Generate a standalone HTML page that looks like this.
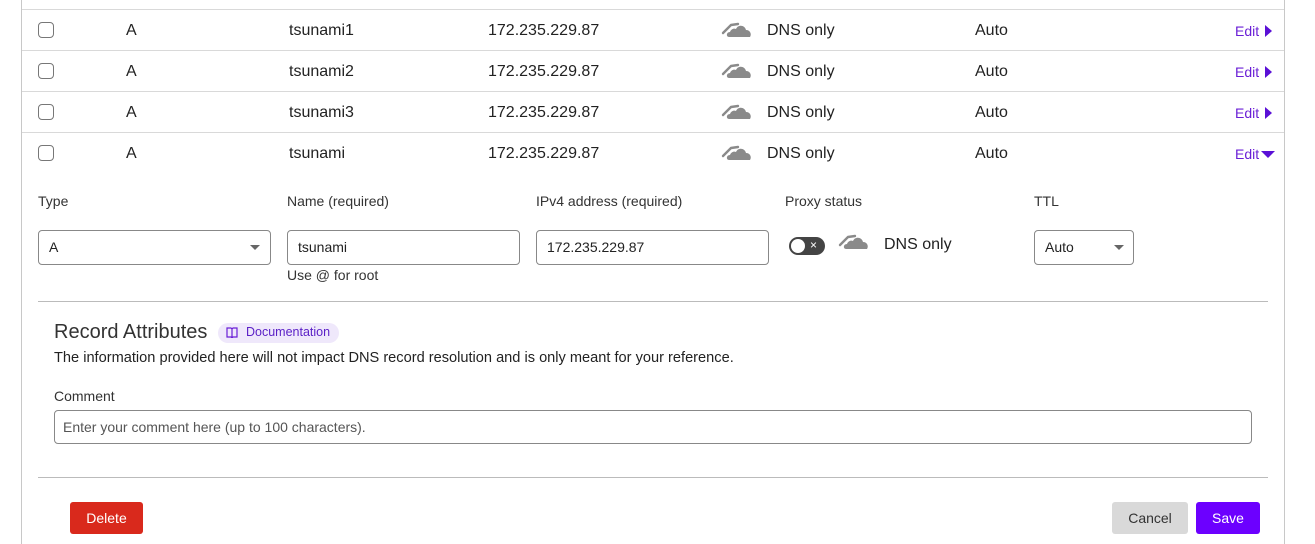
<!DOCTYPE html>
<html><head><meta charset="utf-8"><style>
*{box-sizing:border-box;margin:0;padding:0}
body{width:1315px;height:544px;background:#fff;font-family:"Liberation Sans",sans-serif;color:#222;position:relative;overflow:hidden}
.a{position:absolute;white-space:nowrap}
.hl{position:absolute;left:22px;width:1262px;height:1px;background:#d9d9d9}
.cb{position:absolute;left:38px;width:16px;height:16px;border:1px solid #777;border-radius:4px}
.t{font-size:16px}
.edit{color:#6a1fd6;font-size:14px}
.inp{position:absolute;border:1px solid #888;border-radius:4px;height:35px;font-size:14px;padding:0 10px;line-height:33px}
.lab{font-size:14px;color:#333}
.caret{position:absolute;width:0;height:0;border-left:5px solid transparent;border-right:5px solid transparent;border-top:5px solid #666}
.btn{position:absolute;height:32px;border-radius:3px;font-size:14px;line-height:32px;text-align:center}
</style></head><body>
<div class="a" style="left:21px;top:0;width:1px;height:544px;background:#c8c8c8"></div>
<div class="a" style="left:1284px;top:0;width:1px;height:544px;background:#c8c8c8"></div>
<div class="hl" style="top:9px"></div>
<div class="hl" style="top:50px"></div>
<div class="hl" style="top:91px"></div>
<div class="hl" style="top:132px"></div>

<div class="cb" style="top:22px"></div><div class="cb" style="top:63px"></div><div class="cb" style="top:104px"></div><div class="cb" style="top:145px"></div>

<div class="a t" style="left:126px;top:22px">A</div><div class="a t" style="left:126px;top:63px">A</div><div class="a t" style="left:126px;top:104px">A</div><div class="a t" style="left:126px;top:145px">A</div>
<div class="a t" style="left:289px;top:22px">tsunami1</div><div class="a t" style="left:289px;top:63px">tsunami2</div><div class="a t" style="left:289px;top:104px">tsunami3</div><div class="a t" style="left:289px;top:145px">tsunami</div>
<div class="a t" style="left:488px;top:22px">172.235.229.87</div><div class="a t" style="left:488px;top:63px">172.235.229.87</div><div class="a t" style="left:488px;top:104px">172.235.229.87</div><div class="a t" style="left:488px;top:145px">172.235.229.87</div>

<svg width="0" height="0" style="position:absolute"><defs><g id="cl"><path d="M2 16 L10 8 L17 7" stroke="#8a8a8a" stroke-width="2.4" fill="none" stroke-linecap="round" stroke-linejoin="round"/><path d="M8 20 C5 20 5 15 9 15 C10 12 13 11 15 12 C17 7 24 8 25 13 C29 13 31 17 29 20 Z" fill="#8a8a8a"/></g></defs></svg>
<svg class="a" style="left:721px;top:17px" width="32" height="22"><use href="#cl"/></svg>
<svg class="a" style="left:721px;top:58px" width="32" height="22"><use href="#cl"/></svg>
<svg class="a" style="left:721px;top:99px" width="32" height="22"><use href="#cl"/></svg>
<svg class="a" style="left:721px;top:140px" width="32" height="22"><use href="#cl"/></svg>
<div class="a t" style="left:767px;top:22px">DNS only</div><div class="a t" style="left:767px;top:63px">DNS only</div><div class="a t" style="left:767px;top:104px">DNS only</div><div class="a t" style="left:767px;top:145px">DNS only</div>
<div class="a t" style="left:975px;top:22px">Auto</div><div class="a t" style="left:975px;top:63px">Auto</div><div class="a t" style="left:975px;top:104px">Auto</div><div class="a t" style="left:975px;top:145px">Auto</div>

<div class="a edit" style="left:1235px;top:23px">Edit</div><div class="a" style="left:1265px;top:25px;border-top:6px solid transparent;border-bottom:6px solid transparent;border-left:7px solid #5a10d6"></div>
<div class="a edit" style="left:1235px;top:64px">Edit</div><div class="a" style="left:1265px;top:66px;border-top:6px solid transparent;border-bottom:6px solid transparent;border-left:7px solid #5a10d6"></div>
<div class="a edit" style="left:1235px;top:105px">Edit</div><div class="a" style="left:1265px;top:107px;border-top:6px solid transparent;border-bottom:6px solid transparent;border-left:7px solid #5a10d6"></div>
<div class="a edit" style="left:1235px;top:146px">Edit</div><div class="a" style="left:1261px;top:151px;border-left:7px solid transparent;border-right:7px solid transparent;border-top:7px solid #5a10d6"></div>

<div class="a lab" style="left:38px;top:193px">Type</div>
<div class="a lab" style="left:287px;top:193px">Name (required)</div>
<div class="a lab" style="left:536px;top:193px">IPv4 address (required)</div>
<div class="a lab" style="left:785px;top:193px">Proxy status</div>
<div class="a lab" style="left:1034px;top:193px">TTL</div>

<div class="inp" style="left:38px;top:230px;width:233px">A</div><div class="caret" style="left:250px;top:245px"></div>
<div class="inp" style="left:287px;top:230px;width:233px">tsunami</div>
<div class="a lab" style="left:287px;top:267px">Use @ for root</div>
<div class="inp" style="left:536px;top:230px;width:233px">172.235.229.87</div>
<div class="a" style="left:789px;top:237px;width:36px;height:18px;border-radius:9px;background:#444"></div>
<div class="a" style="left:791px;top:239px;width:14px;height:14px;border-radius:7px;background:#fff"></div>
<div class="a" style="left:810px;top:238px;color:#fff;font-size:12px;line-height:14px">×</div>
<svg class="a" style="left:838px;top:229px" width="32" height="22"><use href="#cl"/></svg>
<div class="a t" style="left:884px;top:236px">DNS only</div>
<div class="inp" style="left:1034px;top:230px;width:100px">Auto</div><div class="caret" style="left:1114px;top:245px"></div>

<div class="a" style="left:38px;top:301px;width:1230px;height:1px;background:#bbb"></div>
<div class="a" style="left:54px;top:321px;font-size:20px;color:#333">Record Attributes</div>
<div class="a" style="left:218px;top:323px;width:121px;height:20px;border-radius:10px;background:#efe8fb"></div>
<svg class="a" style="left:226px;top:327px" width="12" height="11"><path d="M1 1h4l1 1 1-1h4v9H7l-1 1-1-1H1z M6 2v8" stroke="#6a1fd6" stroke-width="1.2" fill="none"/></svg>
<div class="a" style="left:246px;top:325px;font-size:12.5px;color:#5a1fc6">Documentation</div>
<div class="a" style="left:54px;top:350px;font-size:14.6px;color:#222">The information provided here will not impact DNS record resolution and is only meant for your reference.</div>
<div class="a lab" style="left:54px;top:388px">Comment</div>
<div class="inp" style="left:54px;top:410px;width:1198px;height:34px;color:#555;padding:0 8px">Enter your comment here (up to 100 characters).</div>
<div class="a" style="left:38px;top:477px;width:1230px;height:1px;background:#bbb"></div>

<div class="btn" style="left:70px;top:502px;width:73px;background:#d9291c;color:#fff">Delete</div>
<div class="btn" style="left:1112px;top:502px;width:76px;background:#d9d9d9;color:#333">Cancel</div>
<div class="btn" style="left:1196px;top:502px;width:64px;background:#6c00ff;color:#fff">Save</div>
</body></html>
